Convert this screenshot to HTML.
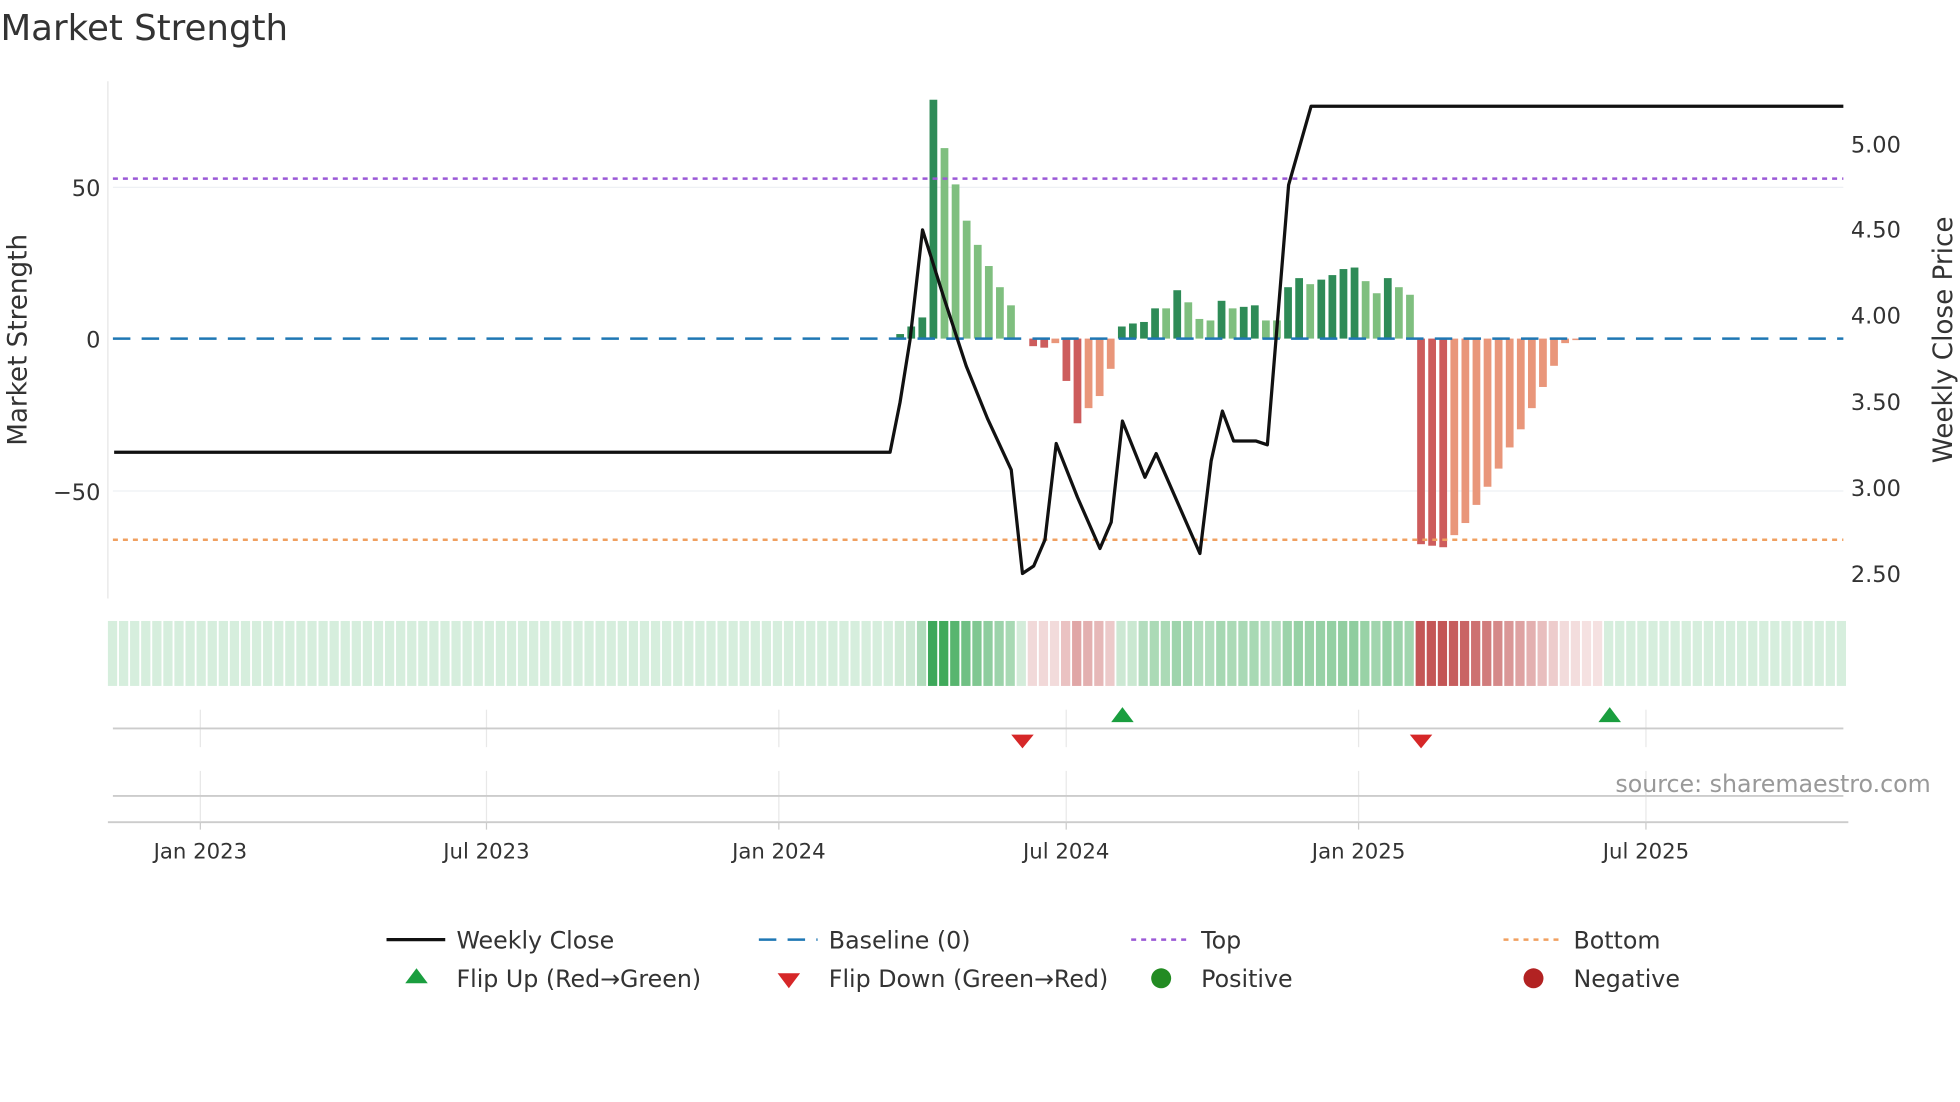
<!DOCTYPE html>
<html><head><meta charset="utf-8"><style>
html,body{margin:0;padding:0;background:#fff;}
svg{display:block;font-family:"DejaVu Sans","Liberation Sans",sans-serif;}
</style></head><body>
<svg id="s" width="1960" height="1102" viewBox="0 0 1568 882" xmlns="http://www.w3.org/2000/svg">
<rect width="1568" height="882" fill="#fff"/>
<text x="0" y="32" font-size="28.5" fill="#333">Market Strength</text>
<line x1="86" y1="65" x2="86" y2="479" stroke="#e6e6e6"/>
<line x1="90" y1="150" x2="1475" y2="150" stroke="#eef0f4"/>
<line x1="90" y1="393" x2="1475" y2="393" stroke="#eef0f4"/>
<g font-size="18" fill="#333" text-anchor="end">
<text x="80" y="157">50</text><text x="80" y="278">0</text><text x="80" y="400">−50</text></g>
<g font-size="18" fill="#333">
<text x="1481" y="122">5.00</text><text x="1481" y="190">4.50</text><text x="1481" y="259">4.00</text>
<text x="1481" y="328">3.50</text><text x="1481" y="397">3.00</text><text x="1481" y="466">2.50</text></g>
<text transform="translate(21,272) rotate(-90)" font-size="21" fill="#333" text-anchor="middle">Market Strength</text>
<text transform="translate(1562,272) rotate(-90)" font-size="21" fill="#333" text-anchor="middle">Weekly Close Price</text>
<g id="bars"></g>
<line x1="90" y1="271" x2="1475" y2="271" stroke="#1f77b4" stroke-width="2" stroke-dasharray="14,9"/>
<line x1="90" y1="143" x2="1475" y2="143" stroke="#9b59d6" stroke-width="2" stroke-dasharray="4,4"/>
<line x1="90" y1="432" x2="1475" y2="432" stroke="#f0a060" stroke-width="2" stroke-dasharray="4,4"/>
<polyline fill="none" stroke="#111" stroke-width="2.6" stroke-linejoin="round" points="91,362 712,362 720,322 728,272 738,184 755,238 773,293 790,335 809,376 818,459 827,453 836,432 845,355 862,398 880,439 889,418 898,337 916,382 925,363 960,443 969,369 978,329 987,353 1005,353 1014,356 1031,148 1049,85 1475,85"/>
<g id="heat"></g>
<g stroke="#e8e8e8">
<line x1="160" y1="568" x2="160" y2="598"/><line x1="389" y1="568" x2="389" y2="598"/><line x1="623" y1="568" x2="623" y2="598"/><line x1="853" y1="568" x2="853" y2="598"/><line x1="1087" y1="568" x2="1087" y2="598"/><line x1="1317" y1="568" x2="1317" y2="598"/>
<line x1="160" y1="617" x2="160" y2="657"/><line x1="389" y1="617" x2="389" y2="657"/><line x1="623" y1="617" x2="623" y2="657"/><line x1="853" y1="617" x2="853" y2="657"/><line x1="1087" y1="617" x2="1087" y2="657"/><line x1="1317" y1="617" x2="1317" y2="657"/>
</g>
<line x1="90" y1="583" x2="1475" y2="583" stroke="#ccc" stroke-width="1.5"/>
<line x1="90" y1="637" x2="1475" y2="637" stroke="#ccc" stroke-width="1.5"/>
<line x1="86" y1="658" x2="1479" y2="658" stroke="#ccc" stroke-width="1.5"/>
<g stroke="#ccc"><line x1="160" y1="658" x2="160" y2="664"/><line x1="389" y1="658" x2="389" y2="664"/><line x1="623" y1="658" x2="623" y2="664"/><line x1="853" y1="658" x2="853" y2="664"/><line x1="1087" y1="658" x2="1087" y2="664"/><line x1="1317" y1="658" x2="1317" y2="664"/></g>
<polygon points="898,566 889,578 907,578" fill="#1a9e3f"/>
<polygon points="1288,566 1279,578 1297,578" fill="#1a9e3f"/>
<polygon points="818,599 809,588 827,588" fill="#d62728"/>
<polygon points="1137,599 1128,588 1146,588" fill="#d62728"/>
<text x="1545" y="634" font-size="19" fill="#999" text-anchor="end">source: sharemaestro.com</text>
<g font-size="17" fill="#333" text-anchor="middle">
<text x="160" y="687">Jan 2023</text><text x="389" y="687">Jul 2023</text><text x="623" y="687">Jan 2024</text>
<text x="853" y="687">Jul 2024</text><text x="1087" y="687">Jan 2025</text><text x="1317" y="687">Jul 2025</text></g>
<g font-size="19" fill="#333">
<line x1="309" y1="752" x2="356" y2="752" stroke="#111" stroke-width="2.6"/><text x="365" y="759">Weekly Close</text>
<line x1="607" y1="752" x2="654" y2="752" stroke="#1f77b4" stroke-width="2" stroke-dasharray="14,9"/><text x="663" y="759">Baseline (0)</text>
<line x1="905" y1="752" x2="952" y2="752" stroke="#9b59d6" stroke-width="2" stroke-dasharray="4,4"/><text x="961" y="759">Top</text>
<line x1="1203" y1="752" x2="1250" y2="752" stroke="#f0a060" stroke-width="2" stroke-dasharray="4,4"/><text x="1259" y="759">Bottom</text>
<polygon points="333,775 324,787 342,787" fill="#1a9e3f"/><text x="365" y="790">Flip Up (Red→Green)</text>
<polygon points="631,791 622,779 640,779" fill="#d62728"/><text x="663" y="790">Flip Down (Green→Red)</text>
<circle cx="929" cy="783" r="8" fill="#228b22"/><text x="961" y="790">Positive</text>
<circle cx="1227" cy="783" r="8" fill="#b22222"/><text x="1259" y="790">Negative</text>
</g>
</svg>
<script>
var N="http://www.w3.org/2000/svg";
function R(g,x,y,w,h,c){var r=document.createElementNS(N,"rect");r.setAttribute("x",x);r.setAttribute("y",y);r.setAttribute("width",w);r.setAttribute("height",h);r.setAttribute("fill",c);document.getElementById(g).appendChild(r);}
var D="#2e8b57",L="#7fbf7f",RD="#cd5c5c",RL="#e9967a";
var b=[[1.5,D],[4,D],[7,D],[79,D],[63,L],[51,L],[39,L],[31,L],[24,L],[17,L],[11,L],[0,L],[-2.5,RD],[-3,RD],[-1.5,RL],[-14,RD],[-28,RD],[-23,RL],[-19,RL],[-10,RL],
[4,D],[5,D],[5.5,D],[10,D],[10,L],[16,D],[12,L],[6.5,L],[6,L],[12.5,D],[10,L],[10.5,D],[11,D],[6,L],[6,L],[17,D],[20,D],[18,L],[19.5,D],[21,D],[23,D],[23.5,D],[19,L],[15,L],[20,D],[17,L],[14.5,L],
[-68,RD],[-68.5,RD],[-69,RD],[-65,RL],[-61,RL],[-55,RL],[-49,RL],[-43,RL],[-36,RL],[-30,RL],[-23,RL],[-16,RL],[-9,RL],[-1.5,RL],[-0.5,RL]];
var sp=8.87;
b.forEach(function(v,i){var x=720+i*sp-3,h=Math.abs(v[0])*2.42;if(h<0.5)return;R("bars",x,v[0]>0?271-h:271,6.2,h,v[1]);});
var st=86,n=157;
for(var k=0;k<n;k++){var x=st+k*sp,c="#d6eedd",bi=Math.round((x+3-720)/sp);
if(bi>=0&&bi<b.length){var v=b[bi][0],a;
if(v>0||(v==0&&bi<12)){a=Math.min(1,Math.abs(v)/80);c="rgba(40,160,70,"+(0.2+0.75*a+(v>5?0.1:0))+")";if(bi==3)c="#3da85a";}
else{a=Math.min(1,Math.abs(v)/70);c="rgba(190,70,70,"+(0.18+0.75*a)+")";}}
else if(bi>=b.length&&x<1283)c="rgba(190,70,70,0.16)";
R("heat",x,497,7.4,52,c);}
</script>
</body></html>
